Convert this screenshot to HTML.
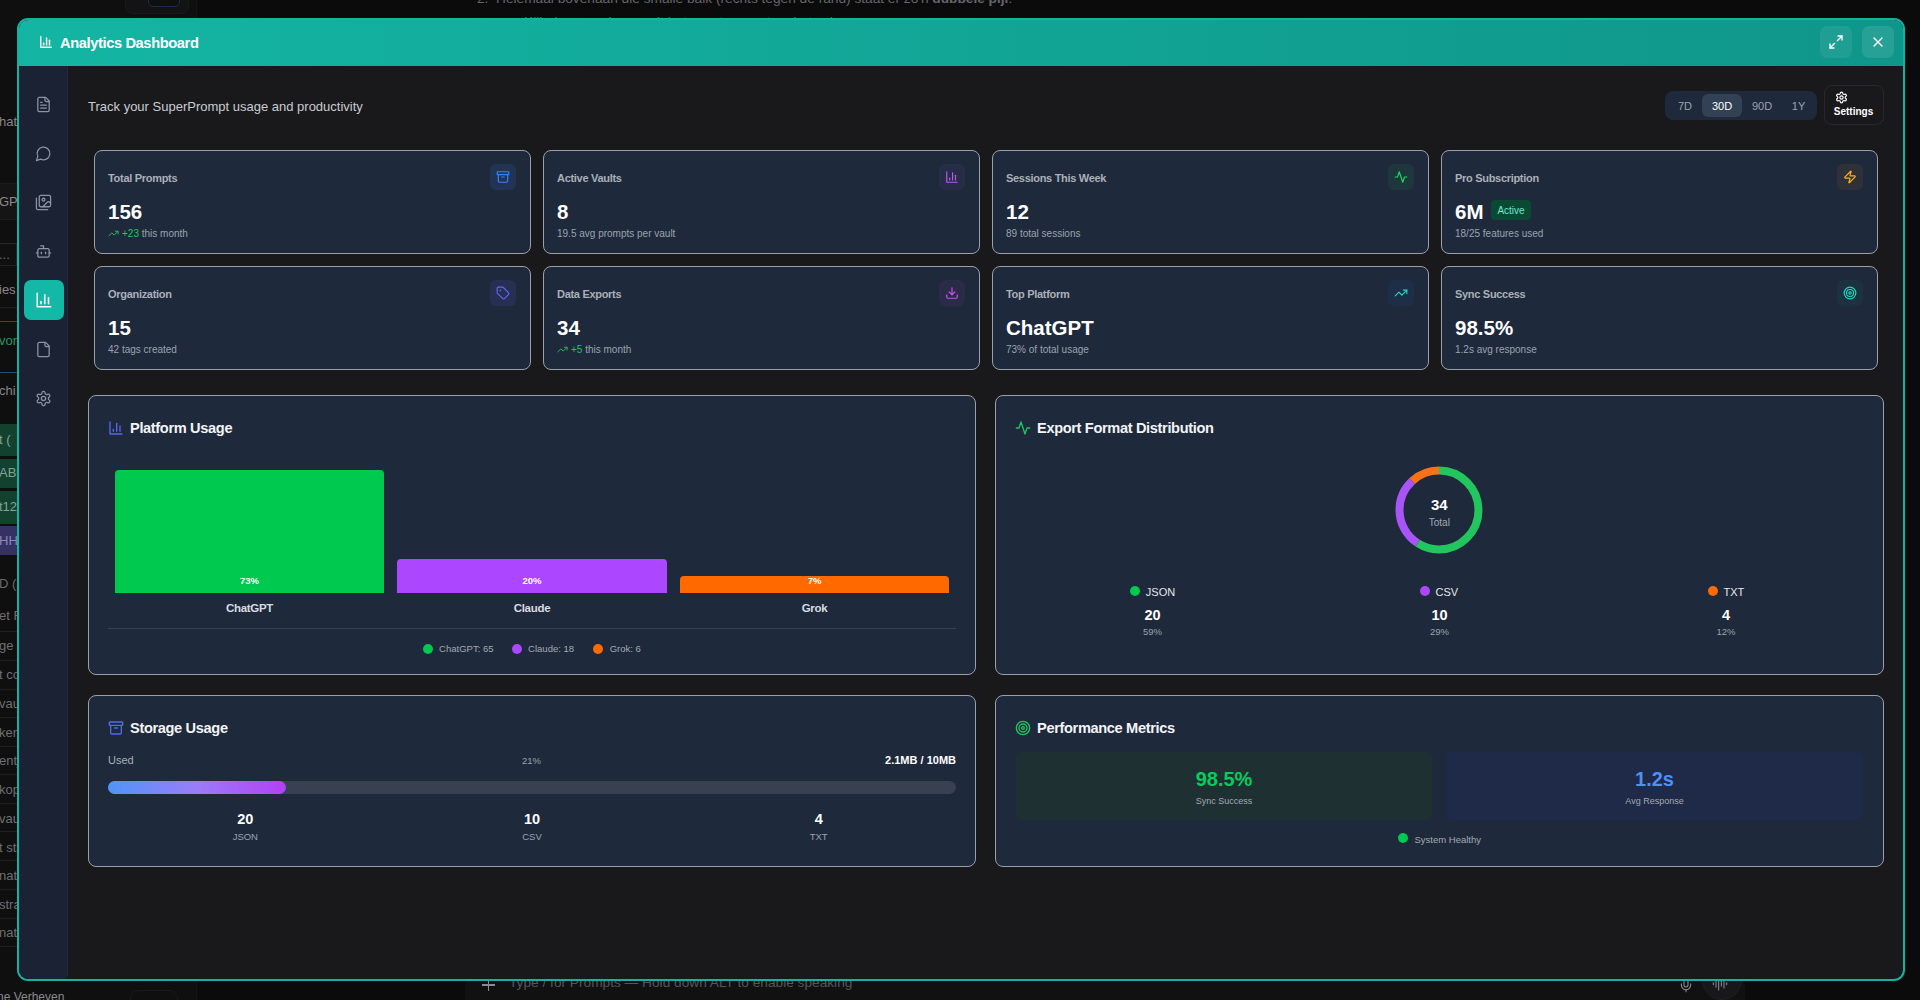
<!DOCTYPE html>
<html>
<head>
<meta charset="utf-8">
<style>
*{box-sizing:border-box;margin:0;padding:0}
html,body{width:1920px;height:1000px;overflow:hidden;background:#0b0b0c;font-family:"Liberation Sans",sans-serif;color:#fff}
body{position:relative}
svg{display:block}
.ic{fill:none;stroke:currentColor;stroke-width:2;stroke-linecap:round;stroke-linejoin:round}
#modal{position:absolute;left:17px;top:18px;width:1888px;height:963px;border:2px solid #12b3a1;border-radius:11px;overflow:hidden;background:#19191c}
#hdr{position:absolute;left:0;top:0;width:100%;height:46px;background:linear-gradient(90deg,#14b5a3,#0f968a)}
#side{position:absolute;left:0;top:46px;width:49px;bottom:0;background:#1b2234;border-right:1px solid #1f2b3d;border-bottom-right-radius:5px}
.card{position:absolute;width:437px;height:104px;background:#1e293b;border:1.3px solid #9aa0a9;border-radius:8px}
.panel{position:absolute;background:#1e293b;border:1.3px solid #9aa0a9;border-radius:8px}
.hbtn{position:absolute;top:6px;width:32px;height:32px;border-radius:7px;background:rgba(255,255,255,0.07)}
</style>
</head>
<body>
<div style="position:absolute;left:0;top:0;width:197px;height:1000px;background:#0f0f10;border-right:1px solid #141416"></div>
<div style="position:absolute;left:0;top:183px;width:17px;height:37px;background:#151516;border-top:1px solid #1c1c1e;border-bottom:1px solid #1c1c1e"></div>
<div style="position:absolute;left:0;top:243px;width:17px;height:23px;background:#101011;border:1px solid #26262a;border-left:none"></div>
<div style="position:absolute;left:0;top:307px;width:17px;height:1px;background:#222"></div>
<div style="position:absolute;left:0;top:321px;width:17px;height:1px;background:#29466f"></div>
<div style="position:absolute;left:0;top:372px;width:17px;height:1px;background:#29466f"></div>
<div style="position:absolute;left:0;top:424px;width:17px;height:32px;background:#124130"></div>
<div style="position:absolute;left:0;top:459px;width:17px;height:29px;background:#124130"></div>
<div style="position:absolute;left:0;top:491px;width:17px;height:33px;background:#124130"></div>
<div style="position:absolute;left:0;top:526px;width:17px;height:29px;background:#363163"></div>
<div style="position:absolute;left:0;top:631px;width:17px;height:1px;background:#1f1f22"></div>
<div style="position:absolute;left:0;top:659.5px;width:17px;height:1px;background:#1f1f22"></div>
<div style="position:absolute;left:0;top:689px;width:17px;height:1px;background:#1f1f22"></div>
<div style="position:absolute;left:0;top:717px;width:17px;height:1px;background:#1f1f22"></div>
<div style="position:absolute;left:0;top:746px;width:17px;height:1px;background:#1f1f22"></div>
<div style="position:absolute;left:0;top:774px;width:17px;height:1px;background:#1f1f22"></div>
<div style="position:absolute;left:0;top:803px;width:17px;height:1px;background:#1f1f22"></div>
<div style="position:absolute;left:0;top:831px;width:17px;height:1px;background:#1f1f22"></div>
<div style="position:absolute;left:0;top:860px;width:17px;height:1px;background:#1f1f22"></div>
<div style="position:absolute;left:0;top:889px;width:17px;height:1px;background:#1f1f22"></div>
<div style="position:absolute;left:0;top:918px;width:17px;height:1px;background:#1f1f22"></div>
<div style="position:absolute;left:0;top:946px;width:17px;height:1px;background:#1f1f22"></div>
<div style="position:absolute;left:-1px;top:114px;white-space:nowrap;font-size:13px;color:#86868b">hats</div>
<div style="position:absolute;left:-1px;top:194px;white-space:nowrap;font-size:13px;color:#8a8a8f">GPT</div>
<div style="position:absolute;left:-1px;top:247px;white-space:nowrap;font-size:13px;color:#6a6a6f">...</div>
<div style="position:absolute;left:-1px;top:282px;white-space:nowrap;font-size:13px;color:#86868b">ies</div>
<div style="position:absolute;left:-1px;top:333px;white-space:nowrap;font-size:13px;color:#1f9a63">vor</div>
<div style="position:absolute;left:-1px;top:383px;white-space:nowrap;font-size:13px;color:#86868b">chi</div>
<div style="position:absolute;left:-1px;top:432px;white-space:nowrap;font-size:13px;color:#7fa596">t  (</div>
<div style="position:absolute;left:-1px;top:465px;white-space:nowrap;font-size:13px;color:#7fa596">ABC</div>
<div style="position:absolute;left:-1px;top:499px;white-space:nowrap;font-size:13px;color:#7fa596">t12</div>
<div style="position:absolute;left:-1px;top:533px;white-space:nowrap;font-size:13px;color:#8d88b8">HHH</div>
<div style="position:absolute;left:-1px;top:576px;white-space:nowrap;font-size:13px;color:#6a6a6f">D (2</div>
<div style="position:absolute;left:-1px;top:608px;white-space:nowrap;font-size:13px;color:#6e6e73">et Fo</div>
<div style="position:absolute;left:-1px;top:638px;white-space:nowrap;font-size:13px;color:#6e6e73">ge c</div>
<div style="position:absolute;left:-1px;top:667px;white-space:nowrap;font-size:13px;color:#6e6e73">t co</div>
<div style="position:absolute;left:-1px;top:696px;white-space:nowrap;font-size:13px;color:#6e6e73">vaul</div>
<div style="position:absolute;left:-1px;top:724.5px;white-space:nowrap;font-size:13px;color:#6e6e73">ken</div>
<div style="position:absolute;left:-1px;top:753px;white-space:nowrap;font-size:13px;color:#6e6e73">entj</div>
<div style="position:absolute;left:-1px;top:782px;white-space:nowrap;font-size:13px;color:#6e6e73"> kop</div>
<div style="position:absolute;left:-1px;top:811px;white-space:nowrap;font-size:13px;color:#6e6e73">vaul</div>
<div style="position:absolute;left:-1px;top:840px;white-space:nowrap;font-size:13px;color:#6e6e73">t sta</div>
<div style="position:absolute;left:-1px;top:868px;white-space:nowrap;font-size:13px;color:#6e6e73">natio</div>
<div style="position:absolute;left:-1px;top:897px;white-space:nowrap;font-size:13px;color:#6e6e73">stra</div>
<div style="position:absolute;left:-1px;top:925px;white-space:nowrap;font-size:13px;color:#6e6e73">natio</div>
<div style="position:absolute;left:125px;top:-10px;width:64px;height:24px;border-radius:8px;background:#131315;border:1px solid #1a1a1c"></div>
<div style="position:absolute;left:148px;top:-8px;width:32px;height:15px;border-radius:5px;background:#0f1013;border:1px solid #1b2a45"></div>
<div style="position:absolute;left:130px;top:990px;width:48px;height:24px;border-radius:8px;background:#0f0f10;border:1px solid #19191b"></div>
<div style="position:absolute;left:-3px;top:990px;white-space:nowrap;font-size:12px;color:#8a8a8f">ne Verheven</div>
<div style="position:absolute;left:477px;top:-9px;white-space:nowrap;font-size:13.7px;color:#66666b">2.&nbsp;&nbsp;Helemaal bovenaan die smalle balk (rechts tegen de rand) staat er zo'n <b>dubbele pijl</b>.</div>
<div style="position:absolute;left:524px;top:14px;white-space:nowrap;font-size:13.7px;color:#66666b">Klik daar op, dan wordt het venster groot op het scherm.</div>
<div style="position:absolute;left:465px;top:966px;width:1280px;height:60px;border-radius:20px;background:#111112"></div>
<div style="position:absolute;left:482px;top:984px;width:13px;height:1.5px;background:#8a8a8f"></div><div style="position:absolute;left:487.7px;top:978px;width:1.5px;height:13px;background:#8a8a8f"></div>
<div style="position:absolute;left:509px;top:975px;white-space:nowrap;font-size:13.7px;color:#55555a">Type / for Prompts — Hold down ALT to enable speaking</div>
<div style="position:absolute;left:1702px;top:960px;width:40px;height:40px;border-radius:20px;background:#18181a;border:1px solid #1f1f22"></div>
<svg class="ic" style="position:absolute;left:1678px;top:977px;color:#8a8a8f;stroke-width:1.6" width="16" height="16" viewBox="0 0 24 24"><path d="M12 2a3 3 0 0 0-3 3v7a3 3 0 0 0 6 0V5a3 3 0 0 0-3-3Z"/><path d="M19 10v2a7 7 0 0 1-14 0v-2"/><line x1="12" x2="12" y1="19" y2="22"/></svg>
<svg class="ic" style="position:absolute;left:1712px;top:976px;color:#8a8a8f;stroke-width:1.6" width="16" height="16" viewBox="0 0 24 24"><path d="M2 10v3"/><path d="M6 6v11"/><path d="M10 3v18"/><path d="M14 8v7"/><path d="M18 5v13"/><path d="M22 10v3"/></svg>
<div id="modal">
<div id="hdr">
<svg class="ic" style="position:absolute;left:20px;top:15px;color:#fff;stroke-width:2.4" width="14" height="14" viewBox="0 0 24 24"><path d="M3 3v18h18"/><path d="M18 17V9"/><path d="M13 17V5"/><path d="M8 17v-3"/></svg>
<div style="position:absolute;left:41px;top:15px;white-space:nowrap;font-size:14.7px;font-weight:bold;letter-spacing:-0.4px;color:#fff">Analytics Dashboard</div>
<div class="hbtn" style="left:1801px"><svg class="ic" style="position:absolute;left:8px;top:8px;color:#fff;stroke-width:2" width="16" height="16" viewBox="0 0 24 24"><polyline points="15 3 21 3 21 9"/><polyline points="9 21 3 21 3 15"/><line x1="21" x2="14" y1="3" y2="10"/><line x1="3" x2="10" y1="21" y2="14"/></svg></div>
<div class="hbtn" style="left:1843px;background:rgba(255,255,255,0.1)"><svg class="ic" style="position:absolute;left:8px;top:8px;color:#fff;stroke-width:2" width="16" height="16" viewBox="0 0 24 24"><path d="M18 6 6 18"/><path d="m6 6 12 12"/></svg></div>
</div>
<div id="side">
<svg class="ic" style="position:absolute;left:16.0px;top:29.5px;color:#8b93a3;stroke-width:1.8" width="17" height="17" viewBox="0 0 24 24"><path d="M15 2H6a2 2 0 0 0-2 2v16a2 2 0 0 0 2 2h12a2 2 0 0 0 2-2V7Z"/><path d="M14 2v4a2 2 0 0 0 2 2h4"/><path d="M10 9H8"/><path d="M16 13H8"/><path d="M16 17H8"/></svg>
<svg class="ic" style="position:absolute;left:16.0px;top:78.5px;color:#8b93a3;stroke-width:1.8" width="17" height="17" viewBox="0 0 24 24"><path d="M7.9 20A9 9 0 1 0 4 16.1L2 22Z"/></svg>
<svg class="ic" style="position:absolute;left:16.0px;top:127.5px;color:#8b93a3;stroke-width:1.8" width="17" height="17" viewBox="0 0 24 24"><path d="M18 22H4a2 2 0 0 1-2-2V6"/><path d="m22 13-1.296-1.296a2.41 2.41 0 0 0-3.408 0L11 18"/><circle cx="12" cy="8" r="2"/><rect width="16" height="16" x="6" y="2" rx="2"/></svg>
<svg class="ic" style="position:absolute;left:16.0px;top:176.5px;color:#8b93a3;stroke-width:1.8" width="17" height="17" viewBox="0 0 24 24"><path d="M12 8V4H8"/><rect width="16" height="12" x="4" y="8" rx="2"/><path d="M2 14h2"/><path d="M20 14h2"/><path d="M15 13v2"/><path d="M9 13v2"/></svg>
<div style="position:absolute;left:5px;top:214px;width:40px;height:40px;border-radius:7px;background:#14b8a6"></div>
<svg class="ic" style="position:absolute;left:15.5px;top:225px;color:#fff;stroke-width:2" width="18" height="18" viewBox="0 0 24 24"><path d="M3 3v18h18"/><path d="M18 17V9"/><path d="M13 17V5"/><path d="M8 17v-3"/></svg>
<svg class="ic" style="position:absolute;left:16.0px;top:274.5px;color:#8b93a3;stroke-width:1.8" width="17" height="17" viewBox="0 0 24 24"><path d="M15 2H6a2 2 0 0 0-2 2v16a2 2 0 0 0 2 2h12a2 2 0 0 0 2-2V7Z"/><path d="M14 2v4a2 2 0 0 0 2 2h4"/></svg>
<svg class="ic" style="position:absolute;left:16.0px;top:323.5px;color:#8b93a3;stroke-width:1.8" width="17" height="17" viewBox="0 0 24 24"><path d="M12.22 2h-.44a2 2 0 0 0-2 2v.18a2 2 0 0 1-1 1.73l-.43.25a2 2 0 0 1-2 0l-.15-.08a2 2 0 0 0-2.73.73l-.22.38a2 2 0 0 0 .73 2.73l.15.1a2 2 0 0 1 1 1.72v.51a2 2 0 0 1-1 1.74l-.15.09a2 2 0 0 0-.73 2.73l.22.38a2 2 0 0 0 2.73.73l.15-.08a2 2 0 0 1 2 0l.43.25a2 2 0 0 1 1 1.73V20a2 2 0 0 0 2 2h.44a2 2 0 0 0 2-2v-.18a2 2 0 0 1 1-1.73l.43-.25a2 2 0 0 1 2 0l.15.08a2 2 0 0 0 2.73-.73l.22-.39a2 2 0 0 0-.73-2.73l-.15-.08a2 2 0 0 1-1-1.74v-.5a2 2 0 0 1 1-1.74l.15-.09a2 2 0 0 0 .73-2.73l-.22-.38a2 2 0 0 0-2.73-.73l-.15.08a2 2 0 0 1-2 0l-.43-.25a2 2 0 0 1-1-1.73V4a2 2 0 0 0-2-2z"/><circle cx="12" cy="12" r="3"/></svg>
</div>
<div id="main">
</div>
</div>
<div style="position:absolute;left:88px;top:98.7px;white-space:nowrap;font-size:13px;color:#c9ccd1">Track your SuperPrompt usage and productivity</div>
<div style="position:absolute;left:1665px;top:91px;width:152px;height:29px;border-radius:8px;background:#1e293b"></div>
<div style="position:absolute;left:1702px;top:94px;width:40px;height:23px;border-radius:6px;background:#334155"></div>
<div style="position:absolute;left:1665.0px;top:100px;width:40px;text-align:center;white-space:nowrap;font-size:11px;color:#9ca3af">7D</div>
<div style="position:absolute;left:1702.0px;top:100px;width:40px;text-align:center;white-space:nowrap;font-size:11px;color:#ffffff">30D</div>
<div style="position:absolute;left:1742.0px;top:100px;width:40px;text-align:center;white-space:nowrap;font-size:11px;color:#9ca3af">90D</div>
<div style="position:absolute;left:1778.5px;top:100px;width:40px;text-align:center;white-space:nowrap;font-size:11px;color:#9ca3af">1Y</div>
<div style="position:absolute;left:1824px;top:85px;width:60px;height:40px;border-radius:8px;border:1px solid #29292d;background:#19191c"></div>
<svg class="ic" style="position:absolute;left:1834.5px;top:90.5px;color:#fff;stroke-width:2.2" width="13" height="13" viewBox="0 0 24 24"><path d="M12.22 2h-.44a2 2 0 0 0-2 2v.18a2 2 0 0 1-1 1.73l-.43.25a2 2 0 0 1-2 0l-.15-.08a2 2 0 0 0-2.73.73l-.22.38a2 2 0 0 0 .73 2.73l.15.1a2 2 0 0 1 1 1.72v.51a2 2 0 0 1-1 1.74l-.15.09a2 2 0 0 0-.73 2.73l.22.38a2 2 0 0 0 2.73.73l.15-.08a2 2 0 0 1 2 0l.43.25a2 2 0 0 1 1 1.73V20a2 2 0 0 0 2 2h.44a2 2 0 0 0 2-2v-.18a2 2 0 0 1 1-1.73l.43-.25a2 2 0 0 1 2 0l.15.08a2 2 0 0 0 2.73-.73l.22-.39a2 2 0 0 0-.73-2.73l-.15-.08a2 2 0 0 1-1-1.74v-.5a2 2 0 0 1 1-1.74l.15-.09a2 2 0 0 0 .73-2.73l-.22-.38a2 2 0 0 0-2.73-.73l-.15.08a2 2 0 0 1-2 0l-.43-.25a2 2 0 0 1-1-1.73V4a2 2 0 0 0-2-2z"/><circle cx="12" cy="12" r="3"/></svg>
<div style="position:absolute;left:1823.5px;top:106px;width:60px;text-align:center;white-space:nowrap;font-size:10px;font-weight:bold;color:#fff">Settings</div>
<div class="card" style="left:94px;top:150px"></div>
<div style="position:absolute;left:108px;top:172px;white-space:nowrap;font-size:11px;font-weight:bold;letter-spacing:-0.3px;color:#aab0b9">Total Prompts</div>
<div style="position:absolute;left:108px;top:199.5px;white-space:nowrap;font-size:20.5px;font-weight:bold;color:#fff">156</div>
<svg class="ic" style="position:absolute;left:108px;top:228px;color:#22c55e;stroke-width:2" width="11" height="11" viewBox="0 0 24 24"><polyline points="22 7 13.5 15.5 8.5 10.5 2 17"/><polyline points="16 7 22 7 22 13"/></svg>
<div style="position:absolute;left:122px;top:228px;white-space:nowrap;font-size:10px;color:#9ca3af"><span style="color:#22c55e">+23</span> this month</div>
<div style="position:absolute;left:490px;top:164px;width:26px;height:26px;border-radius:6px;background:rgba(59,130,246,0.13)"></div>
<svg class="ic" style="position:absolute;left:496px;top:170px;color:#3b82f6;stroke-width:2" width="14" height="14" viewBox="0 0 24 24"><rect width="20" height="5" x="2" y="3" rx="1"/><path d="M4 8v11a2 2 0 0 0 2 2h12a2 2 0 0 0 2-2V8"/><path d="M10 12h4"/></svg>
<div class="card" style="left:543px;top:150px"></div>
<div style="position:absolute;left:557px;top:172px;white-space:nowrap;font-size:11px;font-weight:bold;letter-spacing:-0.3px;color:#aab0b9">Active Vaults</div>
<div style="position:absolute;left:557px;top:199.5px;white-space:nowrap;font-size:20.5px;font-weight:bold;color:#fff">8</div>
<div style="position:absolute;left:557px;top:228px;white-space:nowrap;font-size:10px;color:#9ca3af">19.5 avg prompts per vault</div>
<div style="position:absolute;left:939px;top:164px;width:26px;height:26px;border-radius:6px;background:rgba(168,85,247,0.07)"></div>
<svg class="ic" style="position:absolute;left:945px;top:170px;color:#b05cf8;stroke-width:2" width="14" height="14" viewBox="0 0 24 24"><path d="M3 3v18h18"/><path d="M18 17V9"/><path d="M13 17V5"/><path d="M8 17v-3"/></svg>
<div class="card" style="left:992px;top:150px"></div>
<div style="position:absolute;left:1006px;top:172px;white-space:nowrap;font-size:11px;font-weight:bold;letter-spacing:-0.3px;color:#aab0b9">Sessions This Week</div>
<div style="position:absolute;left:1006px;top:199.5px;white-space:nowrap;font-size:20.5px;font-weight:bold;color:#fff">12</div>
<div style="position:absolute;left:1006px;top:228px;white-space:nowrap;font-size:10px;color:#9ca3af">89 total sessions</div>
<div style="position:absolute;left:1388px;top:164px;width:26px;height:26px;border-radius:6px;background:rgba(34,197,94,0.09)"></div>
<svg class="ic" style="position:absolute;left:1394px;top:170px;color:#1fd462;stroke-width:2" width="14" height="14" viewBox="0 0 24 24"><path d="M22 12h-4l-3 9L9 3l-3 9H2"/></svg>
<div class="card" style="left:1441px;top:150px"></div>
<div style="position:absolute;left:1455px;top:172px;white-space:nowrap;font-size:11px;font-weight:bold;letter-spacing:-0.3px;color:#aab0b9">Pro Subscription</div>
<div style="position:absolute;left:1455px;top:199.5px;white-space:nowrap;font-size:20.5px;font-weight:bold;color:#fff">6M</div>
<div style="position:absolute;left:1491px;top:200px;width:40px;height:20px;border-radius:4px;background:#0a4a35"></div>
<div style="position:absolute;left:1491.0px;top:204.5px;width:40px;text-align:center;white-space:nowrap;font-size:10px;color:#6ee7c9">Active</div>
<div style="position:absolute;left:1455px;top:228px;white-space:nowrap;font-size:10px;color:#9ca3af">18/25 features used</div>
<div style="position:absolute;left:1837px;top:164px;width:26px;height:26px;border-radius:6px;background:rgba(245,158,11,0.08)"></div>
<svg class="ic" style="position:absolute;left:1843px;top:170px;color:#fbb024;stroke-width:2" width="14" height="14" viewBox="0 0 24 24"><path d="M4 14a1 1 0 0 1-.78-1.63l9.9-10.2a.5.5 0 0 1 .86.46l-1.92 6.02A1 1 0 0 0 13 10h7a1 1 0 0 1 .78 1.63l-9.9 10.2a.5.5 0 0 1-.86-.46l1.92-6.02A1 1 0 0 0 11 14z"/></svg>
<div class="card" style="left:94px;top:266px"></div>
<div style="position:absolute;left:108px;top:288px;white-space:nowrap;font-size:11px;font-weight:bold;letter-spacing:-0.3px;color:#aab0b9">Organization</div>
<div style="position:absolute;left:108px;top:315.5px;white-space:nowrap;font-size:20.5px;font-weight:bold;color:#fff">15</div>
<div style="position:absolute;left:108px;top:344px;white-space:nowrap;font-size:10px;color:#9ca3af">42 tags created</div>
<div style="position:absolute;left:490px;top:280px;width:26px;height:26px;border-radius:6px;background:rgba(99,102,241,0.13)"></div>
<svg class="ic" style="position:absolute;left:496px;top:286px;color:#6366f1;stroke-width:2" width="14" height="14" viewBox="0 0 24 24"><path d="M12.586 2.586A2 2 0 0 0 11.172 2H4a2 2 0 0 0-2 2v7.172a2 2 0 0 0 .586 1.414l8.704 8.704a2.426 2.426 0 0 0 3.42 0l6.58-6.58a2.426 2.426 0 0 0 0-3.42z"/><circle cx="7.5" cy="7.5" r=".5" fill="currentColor"/></svg>
<div class="card" style="left:543px;top:266px"></div>
<div style="position:absolute;left:557px;top:288px;white-space:nowrap;font-size:11px;font-weight:bold;letter-spacing:-0.3px;color:#aab0b9">Data Exports</div>
<div style="position:absolute;left:557px;top:315.5px;white-space:nowrap;font-size:20.5px;font-weight:bold;color:#fff">34</div>
<svg class="ic" style="position:absolute;left:557px;top:344px;color:#22c55e;stroke-width:2" width="11" height="11" viewBox="0 0 24 24"><polyline points="22 7 13.5 15.5 8.5 10.5 2 17"/><polyline points="16 7 22 7 22 13"/></svg>
<div style="position:absolute;left:571px;top:344px;white-space:nowrap;font-size:10px;color:#9ca3af"><span style="color:#22c55e">+5</span> this month</div>
<div style="position:absolute;left:939px;top:280px;width:26px;height:26px;border-radius:6px;background:rgba(217,70,239,0.07)"></div>
<svg class="ic" style="position:absolute;left:945px;top:286px;color:#c855ee;stroke-width:2" width="14" height="14" viewBox="0 0 24 24"><path d="M21 15v4a2 2 0 0 1-2 2H5a2 2 0 0 1-2-2v-4"/><polyline points="7 10 12 15 17 10"/><line x1="12" x2="12" y1="15" y2="3"/></svg>
<div class="card" style="left:992px;top:266px"></div>
<div style="position:absolute;left:1006px;top:288px;white-space:nowrap;font-size:11px;font-weight:bold;letter-spacing:-0.3px;color:#aab0b9">Top Platform</div>
<div style="position:absolute;left:1006px;top:315.5px;white-space:nowrap;font-size:20.5px;font-weight:bold;color:#fff">ChatGPT</div>
<div style="position:absolute;left:1006px;top:344px;white-space:nowrap;font-size:10px;color:#9ca3af">73% of total usage</div>
<div style="position:absolute;left:1388px;top:280px;width:26px;height:26px;border-radius:6px;background:rgba(30,80,160,0.12)"></div>
<svg class="ic" style="position:absolute;left:1394px;top:286px;color:#1ed8bd;stroke-width:2" width="14" height="14" viewBox="0 0 24 24"><polyline points="22 7 13.5 15.5 8.5 10.5 2 17"/><polyline points="16 7 22 7 22 13"/></svg>
<div class="card" style="left:1441px;top:266px"></div>
<div style="position:absolute;left:1455px;top:288px;white-space:nowrap;font-size:11px;font-weight:bold;letter-spacing:-0.3px;color:#aab0b9">Sync Success</div>
<div style="position:absolute;left:1455px;top:315.5px;white-space:nowrap;font-size:20.5px;font-weight:bold;color:#fff">98.5%</div>
<div style="position:absolute;left:1455px;top:344px;white-space:nowrap;font-size:10px;color:#9ca3af">1.2s avg response</div>
<div style="position:absolute;left:1837px;top:280px;width:26px;height:26px;border-radius:6px;background:rgba(20,184,166,0.06)"></div>
<svg class="ic" style="position:absolute;left:1843px;top:286px;color:#1ed8bd;stroke-width:2" width="14" height="14" viewBox="0 0 24 24"><circle cx="12" cy="12" r="10"/><circle cx="12" cy="12" r="6"/><circle cx="12" cy="12" r="2"/></svg>
<div class="panel" style="left:88px;top:395px;width:888px;height:280px"></div>
<svg class="ic" style="position:absolute;left:108px;top:420px;color:#5468f0;stroke-width:2" width="16" height="16" viewBox="0 0 24 24"><path d="M3 3v18h18"/><path d="M18 17V9"/><path d="M13 17V5"/><path d="M8 17v-3"/></svg>
<div style="position:absolute;left:130px;top:420px;white-space:nowrap;font-size:14.6px;font-weight:bold;letter-spacing:-0.35px;color:#f3f4f6">Platform Usage</div>
<div style="position:absolute;left:115px;top:470px;width:269px;height:123px;background:#00c950;border-radius:4px 4px 0 0"></div>
<div style="position:absolute;left:219.5px;top:574.5px;width:60px;text-align:center;white-space:nowrap;font-size:9.5px;font-weight:bold;color:#fff">73%</div>
<div style="position:absolute;left:189.5px;top:602px;width:120px;text-align:center;white-space:nowrap;font-size:11.5px;font-weight:bold;letter-spacing:-0.3px;color:#d8dbe0">ChatGPT</div>
<div style="position:absolute;left:397px;top:559px;width:270px;height:34px;background:#ad46ff;border-radius:4px 4px 0 0"></div>
<div style="position:absolute;left:502.0px;top:574.5px;width:60px;text-align:center;white-space:nowrap;font-size:9.5px;font-weight:bold;color:#fff">20%</div>
<div style="position:absolute;left:472.0px;top:602px;width:120px;text-align:center;white-space:nowrap;font-size:11.5px;font-weight:bold;letter-spacing:-0.3px;color:#d8dbe0">Claude</div>
<div style="position:absolute;left:680px;top:576px;width:269px;height:17px;background:#ff6900;border-radius:4px 4px 0 0"></div>
<div style="position:absolute;left:784.5px;top:574.5px;width:60px;text-align:center;white-space:nowrap;font-size:9.5px;font-weight:bold;color:#fff">7%</div>
<div style="position:absolute;left:754.5px;top:602px;width:120px;text-align:center;white-space:nowrap;font-size:11.5px;font-weight:bold;letter-spacing:-0.3px;color:#d8dbe0">Grok</div>
<div style="position:absolute;left:108px;top:628px;width:848px;height:1px;background:#354053"></div>
<div style="position:absolute;left:422.6px;top:644px;width:10px;height:10px;border-radius:5px;background:#00c950"></div>
<div style="position:absolute;left:439.1px;top:643px;white-space:nowrap;font-size:9.5px;color:#a3a9b3">ChatGPT: 65</div>
<div style="position:absolute;left:511.6px;top:644px;width:10px;height:10px;border-radius:5px;background:#ad46ff"></div>
<div style="position:absolute;left:528.1px;top:643px;white-space:nowrap;font-size:9.5px;color:#a3a9b3">Claude: 18</div>
<div style="position:absolute;left:593.2px;top:644px;width:10px;height:10px;border-radius:5px;background:#ff6900"></div>
<div style="position:absolute;left:609.7px;top:643px;white-space:nowrap;font-size:9.5px;color:#a3a9b3">Grok: 6</div>
<div class="panel" style="left:995px;top:395px;width:889px;height:280px"></div>
<svg class="ic" style="position:absolute;left:1015px;top:420px;color:#22c55e;stroke-width:2" width="16" height="16" viewBox="0 0 24 24"><path d="M22 12h-4l-3 9L9 3l-3 9H2"/></svg>
<div style="position:absolute;left:1037px;top:420px;white-space:nowrap;font-size:14.6px;font-weight:bold;letter-spacing:-0.35px;color:#f3f4f6">Export Format Distribution</div>
<svg style="position:absolute;left:1389.3px;top:460.3px" width="100" height="100" viewBox="0 0 100 100"><g transform="rotate(-90 50 50)"><circle cx="50" cy="50" r="39.5" fill="none" stroke="#22c55e" stroke-width="8" stroke-dasharray="146.430 101.756" stroke-dashoffset="0.000"/><circle cx="50" cy="50" r="39.5" fill="none" stroke="#a855f7" stroke-width="8" stroke-dasharray="71.974 176.212" stroke-dashoffset="-146.430"/><circle cx="50" cy="50" r="39.5" fill="none" stroke="#f97316" stroke-width="8" stroke-dasharray="29.782 218.404" stroke-dashoffset="-218.404"/></g></svg>
<div style="position:absolute;left:1409.3px;top:496px;width:60px;text-align:center;white-space:nowrap;font-size:15px;font-weight:bold;color:#fff">34</div>
<div style="position:absolute;left:1409.3px;top:517px;width:60px;text-align:center;white-space:nowrap;font-size:10px;color:#a3a9b3">Total</div>
<div style="position:absolute;left:1129.85px;top:586px;width:10px;height:10px;border-radius:5px;background:#00c950"></div>
<div style="position:absolute;left:1145.85px;top:585.7px;white-space:nowrap;font-size:11px;color:#e5e7eb">JSON</div>
<div style="position:absolute;left:1122.5px;top:606.6px;width:60px;text-align:center;white-space:nowrap;font-size:14.5px;font-weight:bold;color:#fff">20</div>
<div style="position:absolute;left:1122.5px;top:626px;width:60px;text-align:center;white-space:nowrap;font-size:9.5px;color:#9ca3af">59%</div>
<div style="position:absolute;left:1419.5px;top:586px;width:10px;height:10px;border-radius:5px;background:#ad46ff"></div>
<div style="position:absolute;left:1435.5px;top:585.7px;white-space:nowrap;font-size:11px;color:#e5e7eb">CSV</div>
<div style="position:absolute;left:1409.5px;top:606.6px;width:60px;text-align:center;white-space:nowrap;font-size:14.5px;font-weight:bold;color:#fff">10</div>
<div style="position:absolute;left:1409.5px;top:626px;width:60px;text-align:center;white-space:nowrap;font-size:9.5px;color:#9ca3af">29%</div>
<div style="position:absolute;left:1707.5px;top:586px;width:10px;height:10px;border-radius:5px;background:#ff6900"></div>
<div style="position:absolute;left:1723.5px;top:585.7px;white-space:nowrap;font-size:11px;color:#e5e7eb">TXT</div>
<div style="position:absolute;left:1696.0px;top:606.6px;width:60px;text-align:center;white-space:nowrap;font-size:14.5px;font-weight:bold;color:#fff">4</div>
<div style="position:absolute;left:1696.0px;top:626px;width:60px;text-align:center;white-space:nowrap;font-size:9.5px;color:#9ca3af">12%</div>
<div class="panel" style="left:88px;top:695px;width:888px;height:172px"></div>
<svg class="ic" style="position:absolute;left:108px;top:720px;color:#5468f0;stroke-width:2" width="16" height="16" viewBox="0 0 24 24"><rect width="20" height="5" x="2" y="3" rx="1"/><path d="M4 8v11a2 2 0 0 0 2 2h12a2 2 0 0 0 2-2V8"/><path d="M10 12h4"/></svg>
<div style="position:absolute;left:130px;top:720px;white-space:nowrap;font-size:14.6px;font-weight:bold;letter-spacing:-0.35px;color:#f3f4f6">Storage Usage</div>
<div style="position:absolute;left:108px;top:754px;white-space:nowrap;font-size:11px;color:#aab0b9">Used</div>
<div style="position:absolute;left:501.5px;top:755px;width:60px;text-align:center;white-space:nowrap;font-size:9.5px;color:#9ca3af">21%</div>
<div style="position:absolute;left:836px;top:754px;width:120px;text-align:right;white-space:nowrap;font-size:11px;font-weight:bold;color:#fff">2.1MB / 10MB</div>
<div style="position:absolute;left:108px;top:781px;width:848px;height:13px;border-radius:7px;background:#374151"></div>
<div style="position:absolute;left:108px;top:781px;width:178px;height:13px;border-radius:7px;background:linear-gradient(90deg,#4f95f8,#9a7cf9 50%,#b340f5)"></div>
<div style="position:absolute;left:215.3px;top:811px;width:60px;text-align:center;white-space:nowrap;font-size:14.5px;font-weight:bold;color:#fff">20</div>
<div style="position:absolute;left:215.3px;top:831px;width:60px;text-align:center;white-space:nowrap;font-size:9.5px;color:#9ca3af">JSON</div>
<div style="position:absolute;left:502.0px;top:811px;width:60px;text-align:center;white-space:nowrap;font-size:14.5px;font-weight:bold;color:#fff">10</div>
<div style="position:absolute;left:502.0px;top:831px;width:60px;text-align:center;white-space:nowrap;font-size:9.5px;color:#9ca3af">CSV</div>
<div style="position:absolute;left:788.7px;top:811px;width:60px;text-align:center;white-space:nowrap;font-size:14.5px;font-weight:bold;color:#fff">4</div>
<div style="position:absolute;left:788.7px;top:831px;width:60px;text-align:center;white-space:nowrap;font-size:9.5px;color:#9ca3af">TXT</div>
<div class="panel" style="left:995px;top:695px;width:889px;height:172px"></div>
<svg class="ic" style="position:absolute;left:1015px;top:720px;color:#22c55e;stroke-width:2" width="16" height="16" viewBox="0 0 24 24"><circle cx="12" cy="12" r="10"/><circle cx="12" cy="12" r="6"/><circle cx="12" cy="12" r="2"/></svg>
<div style="position:absolute;left:1037px;top:720px;white-space:nowrap;font-size:14.6px;font-weight:bold;letter-spacing:-0.35px;color:#f3f4f6">Performance Metrics</div>
<div style="position:absolute;left:1016px;top:752px;width:416px;height:68px;border-radius:6px;background:#1f3033"></div>
<div style="position:absolute;left:1446px;top:752px;width:417px;height:68px;border-radius:6px;background:#1e2a48"></div>
<div style="position:absolute;left:1164.0px;top:767.5px;width:120px;text-align:center;white-space:nowrap;font-size:20px;font-weight:bold;color:#06cc5c">98.5%</div>
<div style="position:absolute;left:1164.0px;top:796px;width:120px;text-align:center;white-space:nowrap;font-size:9px;color:#a3a9b3">Sync Success</div>
<div style="position:absolute;left:1594.5px;top:767.5px;width:120px;text-align:center;white-space:nowrap;font-size:20px;font-weight:bold;color:#4f8ff7">1.2s</div>
<div style="position:absolute;left:1594.5px;top:796px;width:120px;text-align:center;white-space:nowrap;font-size:9px;color:#a3a9b3">Avg Response</div>
<div style="position:absolute;left:1397.5px;top:832.5px;width:10px;height:10px;border-radius:5px;background:#00c950"></div>
<div style="position:absolute;left:1414.5px;top:834px;white-space:nowrap;font-size:9.5px;color:#a3a9b3">System Healthy</div>
</body>
</html>
